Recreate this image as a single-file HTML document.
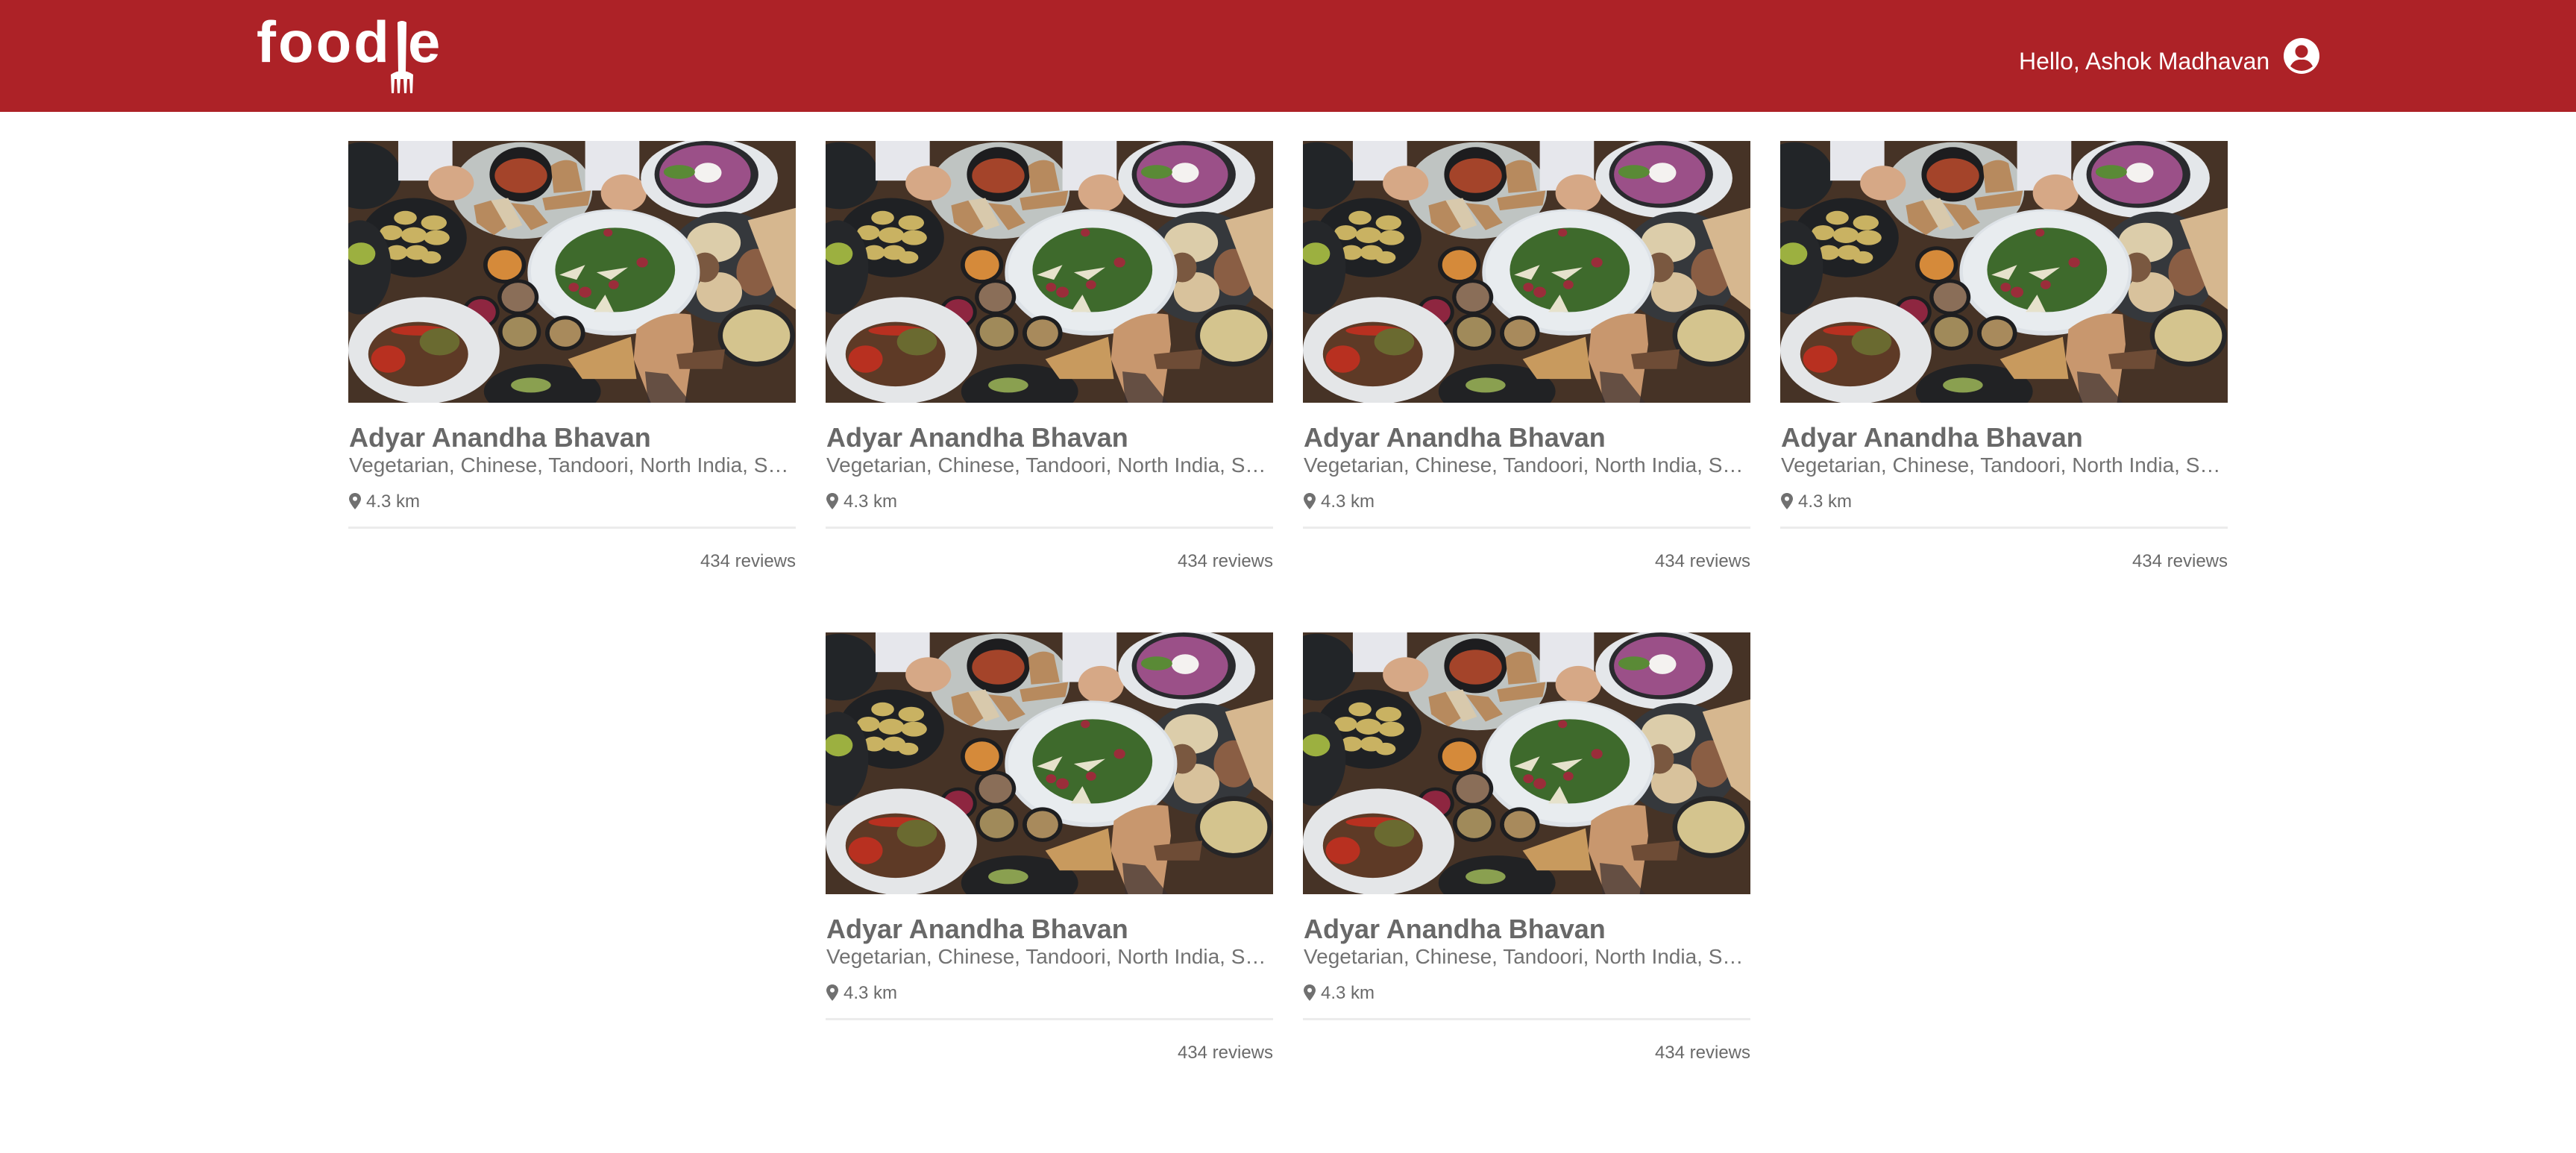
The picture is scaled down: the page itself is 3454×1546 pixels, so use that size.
<!DOCTYPE html>
<html><head><meta charset="utf-8">
<style>
*{margin:0;padding:0;box-sizing:border-box}
body{width:3454px;height:1546px;background:#fff;font-family:"Liberation Sans",Arial,sans-serif;position:relative;overflow:hidden}
.hdr{position:absolute;left:0;top:0;width:3454px;height:150px;background:#ad2227}
.hello{position:absolute;left:2707px;top:62px;font-size:32px;line-height:40px;color:#fff}
.card{position:absolute;width:600px;height:600px}
.card svg.img{position:absolute;left:0;top:0;width:600px;height:351px}
.t{position:absolute;left:1px;top:377px;font-size:36px;line-height:42px;font-weight:bold;color:#686868;white-space:nowrap}
.s{position:absolute;left:1px;top:417px;width:598px;font-size:28px;line-height:36px;color:#727272;white-space:nowrap;overflow:hidden;text-overflow:ellipsis}
.k{position:absolute;left:1px;top:469px;font-size:24px;line-height:30px;color:#6a6a6a;white-space:nowrap}
.k svg{vertical-align:-3px;margin-right:7px}
.ln{position:absolute;left:0;top:517px;width:600px;height:3px;background:#ececec}
.r{position:absolute;right:0;top:549px;font-size:24px;line-height:30px;color:#6a6a6a}
</style></head><body>
<svg width="0" height="0" style="position:absolute">
<defs>
<symbol id="food" viewBox="0 0 1568 1056" preserveAspectRatio="none">
<rect width="1568" height="1056" fill="#4e382a"/>
<rect x="0" y="0" width="1568" height="1056" fill="#3a2a20" opacity=".35"/>
<circle cx="50" cy="140" r="135" fill="#222528"/>
<ellipse cx="230" cy="390" rx="185" ry="160" fill="#1f2124"/>
<g fill="#c9b262"><ellipse cx="200" cy="310" rx="40" ry="28"/><ellipse cx="300" cy="330" rx="45" ry="30"/><ellipse cx="150" cy="370" rx="40" ry="30"/><ellipse cx="230" cy="380" rx="45" ry="32"/><ellipse cx="310" cy="390" rx="45" ry="30"/><ellipse cx="170" cy="450" rx="38" ry="30"/><ellipse cx="240" cy="450" rx="40" ry="30"/><ellipse cx="290" cy="470" rx="35" ry="25"/></g>
<ellipse cx="40" cy="510" rx="110" ry="190" fill="#25272a"/>
<ellipse cx="45" cy="455" rx="50" ry="45" fill="#9cb040"/>
<ellipse cx="610" cy="200" rx="245" ry="195" fill="#bfc4c2"/>
<circle cx="605" cy="135" r="110" fill="#1d1d1f"/>
<ellipse cx="605" cy="140" rx="92" ry="70" fill="#a4442a"/>
<g fill="#b78a5e"><path d="M710 100 Q760 60 800 90 L820 200 L720 210Z"/><path d="M680 230 L850 200 L840 260 L690 280Z"/><path d="M440 260 L500 240 L560 340 L510 380 L450 330Z"/><path d="M500 240 L560 230 L610 340 L560 360Z" fill="#d8c9ac"/><path d="M570 250 L650 260 L700 330 L640 360Z"/></g>
<rect x="175" y="0" width="190" height="160" fill="#e6e7ec"/>
<ellipse cx="360" cy="170" rx="80" ry="70" fill="#d6a886"/>
<rect x="830" y="0" width="190" height="200" fill="#e6e7ec"/>
<ellipse cx="965" cy="210" rx="80" ry="75" fill="#d6a886"/>
<ellipse cx="1265" cy="150" rx="240" ry="160" fill="#e4e7ea"/>
<ellipse cx="1255" cy="135" rx="182" ry="135" fill="#2a2a2e"/>
<ellipse cx="1250" cy="135" rx="160" ry="118" fill="#9b5088"/>
<ellipse cx="1260" cy="128" rx="48" ry="40" fill="#f4f2f0"/>
<ellipse cx="1160" cy="125" rx="55" ry="28" fill="#5a8a36"/>
<ellipse cx="1320" cy="510" rx="210" ry="225" fill="#35383c"/>
<g fill="#c6a577"><ellipse cx="1280" cy="410" rx="95" ry="80" fill="#dccdaa"/><ellipse cx="1430" cy="530" rx="70" ry="95" fill="#8a5e44"/><ellipse cx="1300" cy="610" rx="80" ry="80" fill="#d8c29c"/><ellipse cx="1250" cy="510" rx="50" ry="60" fill="#7a5840"/></g>
<path d="M1400 320 L1568 270 L1568 680 L1500 620Z" fill="#d6b78f"/>
<ellipse cx="930" cy="530" rx="302" ry="255" fill="#dde2e7"/>
<ellipse cx="930" cy="525" rx="290" ry="242" fill="#e8ecef"/>
<ellipse cx="935" cy="520" rx="210" ry="170" fill="#3e6a2c"/>
<g fill="#9a2d3a"><circle cx="830" cy="610" r="22"/><circle cx="1030" cy="490" r="20"/><circle cx="790" cy="590" r="18"/><circle cx="930" cy="580" r="18"/><circle cx="910" cy="370" r="16"/></g>
<g fill="#e6e2cc"><path d="M740 540 L830 500 L800 560Z"/><path d="M870 530 L980 510 L920 560Z"/><path d="M860 690 L900 620 L930 690Z"/></g>
<circle cx="548" cy="500" r="75" fill="#1e1e20"/><circle cx="548" cy="500" r="60" fill="#d58a3a"/>
<circle cx="595" cy="630" r="72" fill="#1e1e20"/><circle cx="595" cy="630" r="58" fill="#8a6e58"/>
<circle cx="465" cy="690" r="65" fill="#1e1e20"/><circle cx="465" cy="690" r="52" fill="#8e2640"/>
<circle cx="600" cy="770" r="75" fill="#1e1e20"/><circle cx="600" cy="770" r="60" fill="#a08a5a"/>
<circle cx="760" cy="775" r="70" fill="#1e1e20"/><circle cx="760" cy="775" r="55" fill="#a88a5c"/>
<ellipse cx="265" cy="845" rx="265" ry="215" fill="#e4e6e8"/>
<ellipse cx="245" cy="860" rx="175" ry="130" fill="#5e3a26"/>
<ellipse cx="140" cy="880" rx="60" ry="55" fill="#b83020"/>
<ellipse cx="250" cy="765" rx="100" ry="20" fill="#b83020"/>
<ellipse cx="320" cy="810" rx="70" ry="55" fill="#6a6a30"/>
<ellipse cx="1430" cy="785" rx="135" ry="125" fill="#262628"/>
<ellipse cx="1430" cy="785" rx="118" ry="105" fill="#d4c48e"/>
<ellipse cx="680" cy="1010" rx="205" ry="110" fill="#212224"/>
<ellipse cx="640" cy="985" rx="70" ry="30" fill="#8aa050"/>
<path d="M770 880 L990 790 L1010 960 L820 960Z" fill="#c89a5e"/>
<path d="M1010 760 Q1100 680 1200 700 L1210 820 L1180 1056 L1060 1056 L1000 880Z" fill="#c8976e"/>
<path d="M1040 930 L1120 940 L1200 1056 L1050 1056Z" fill="#3a3030" opacity=".7"/>
<path d="M1150 860 L1320 840 L1310 920 L1160 920Z" fill="#6e4c36"/>
</symbol>
</defs>
</svg>

<div class="hdr">
<svg style="position:absolute;left:340px;top:20px" width="270" height="110" viewBox="0 0 270 110">
<text x="4" y="63" font-family="Liberation Sans, sans-serif" font-weight="bold" font-size="78" fill="#fff" letter-spacing="3">food</text>
<text x="207" y="63" font-family="Liberation Sans, sans-serif" font-weight="bold" font-size="78" fill="#fff">e</text>
<path d="M193 10 Q199 6 205 10 L204 76 L194 76Z" fill="#fff"/>
<path d="M184 80 Q199 70 214 80 L213 105 L210 105 L209 86 L206 86 L205 105 L202 105 L201 86 L197 86 L196 105 L193 105 L192 86 L189 86 L188 105 L185 105Z" fill="#fff"/>
</svg>
<div class="hello">Hello, Ashok Madhavan</div>
<svg style="position:absolute;left:3062px;top:51px" width="48" height="48" viewBox="0 0 48 48">
<circle cx="24" cy="24" r="24" fill="#fff"/>
<circle cx="24" cy="18" r="8.5" fill="#ad2227"/>
<path d="M9 38 Q14 28 24 29 Q34 28 39 38 Q32 44 24 44 Q16 44 9 38Z" fill="#ad2227"/>
</svg>
</div>

<div class="card" style="left:467px;top:189px"><svg class="img"><use href="#food"/></svg><div class="t">Adyar Anandha Bhavan</div><div class="s">Vegetarian, Chinese, Tandoori, North India, South Indian</div><div class="k"><svg width="16" height="22" viewBox="0 0 16 22"><path d="M8 0C3.6 0 0 3.4 0 7.8 0 13 8 22 8 22S16 13 16 7.8C16 3.4 12.4 0 8 0Z" fill="#707070"/><circle cx="8" cy="7.8" r="3" fill="#fff"/></svg>4.3 km</div><div class="ln"></div><div class="r">434 reviews</div></div>
<div class="card" style="left:1107px;top:189px"><svg class="img"><use href="#food"/></svg><div class="t">Adyar Anandha Bhavan</div><div class="s">Vegetarian, Chinese, Tandoori, North India, South Indian</div><div class="k"><svg width="16" height="22" viewBox="0 0 16 22"><path d="M8 0C3.6 0 0 3.4 0 7.8 0 13 8 22 8 22S16 13 16 7.8C16 3.4 12.4 0 8 0Z" fill="#707070"/><circle cx="8" cy="7.8" r="3" fill="#fff"/></svg>4.3 km</div><div class="ln"></div><div class="r">434 reviews</div></div>
<div class="card" style="left:1747px;top:189px"><svg class="img"><use href="#food"/></svg><div class="t">Adyar Anandha Bhavan</div><div class="s">Vegetarian, Chinese, Tandoori, North India, South Indian</div><div class="k"><svg width="16" height="22" viewBox="0 0 16 22"><path d="M8 0C3.6 0 0 3.4 0 7.8 0 13 8 22 8 22S16 13 16 7.8C16 3.4 12.4 0 8 0Z" fill="#707070"/><circle cx="8" cy="7.8" r="3" fill="#fff"/></svg>4.3 km</div><div class="ln"></div><div class="r">434 reviews</div></div>
<div class="card" style="left:2387px;top:189px"><svg class="img"><use href="#food"/></svg><div class="t">Adyar Anandha Bhavan</div><div class="s">Vegetarian, Chinese, Tandoori, North India, South Indian</div><div class="k"><svg width="16" height="22" viewBox="0 0 16 22"><path d="M8 0C3.6 0 0 3.4 0 7.8 0 13 8 22 8 22S16 13 16 7.8C16 3.4 12.4 0 8 0Z" fill="#707070"/><circle cx="8" cy="7.8" r="3" fill="#fff"/></svg>4.3 km</div><div class="ln"></div><div class="r">434 reviews</div></div>
<div class="card" style="left:1107px;top:848px"><svg class="img"><use href="#food"/></svg><div class="t">Adyar Anandha Bhavan</div><div class="s">Vegetarian, Chinese, Tandoori, North India, South Indian</div><div class="k"><svg width="16" height="22" viewBox="0 0 16 22"><path d="M8 0C3.6 0 0 3.4 0 7.8 0 13 8 22 8 22S16 13 16 7.8C16 3.4 12.4 0 8 0Z" fill="#707070"/><circle cx="8" cy="7.8" r="3" fill="#fff"/></svg>4.3 km</div><div class="ln"></div><div class="r">434 reviews</div></div>
<div class="card" style="left:1747px;top:848px"><svg class="img"><use href="#food"/></svg><div class="t">Adyar Anandha Bhavan</div><div class="s">Vegetarian, Chinese, Tandoori, North India, South Indian</div><div class="k"><svg width="16" height="22" viewBox="0 0 16 22"><path d="M8 0C3.6 0 0 3.4 0 7.8 0 13 8 22 8 22S16 13 16 7.8C16 3.4 12.4 0 8 0Z" fill="#707070"/><circle cx="8" cy="7.8" r="3" fill="#fff"/></svg>4.3 km</div><div class="ln"></div><div class="r">434 reviews</div></div>
</body></html>
